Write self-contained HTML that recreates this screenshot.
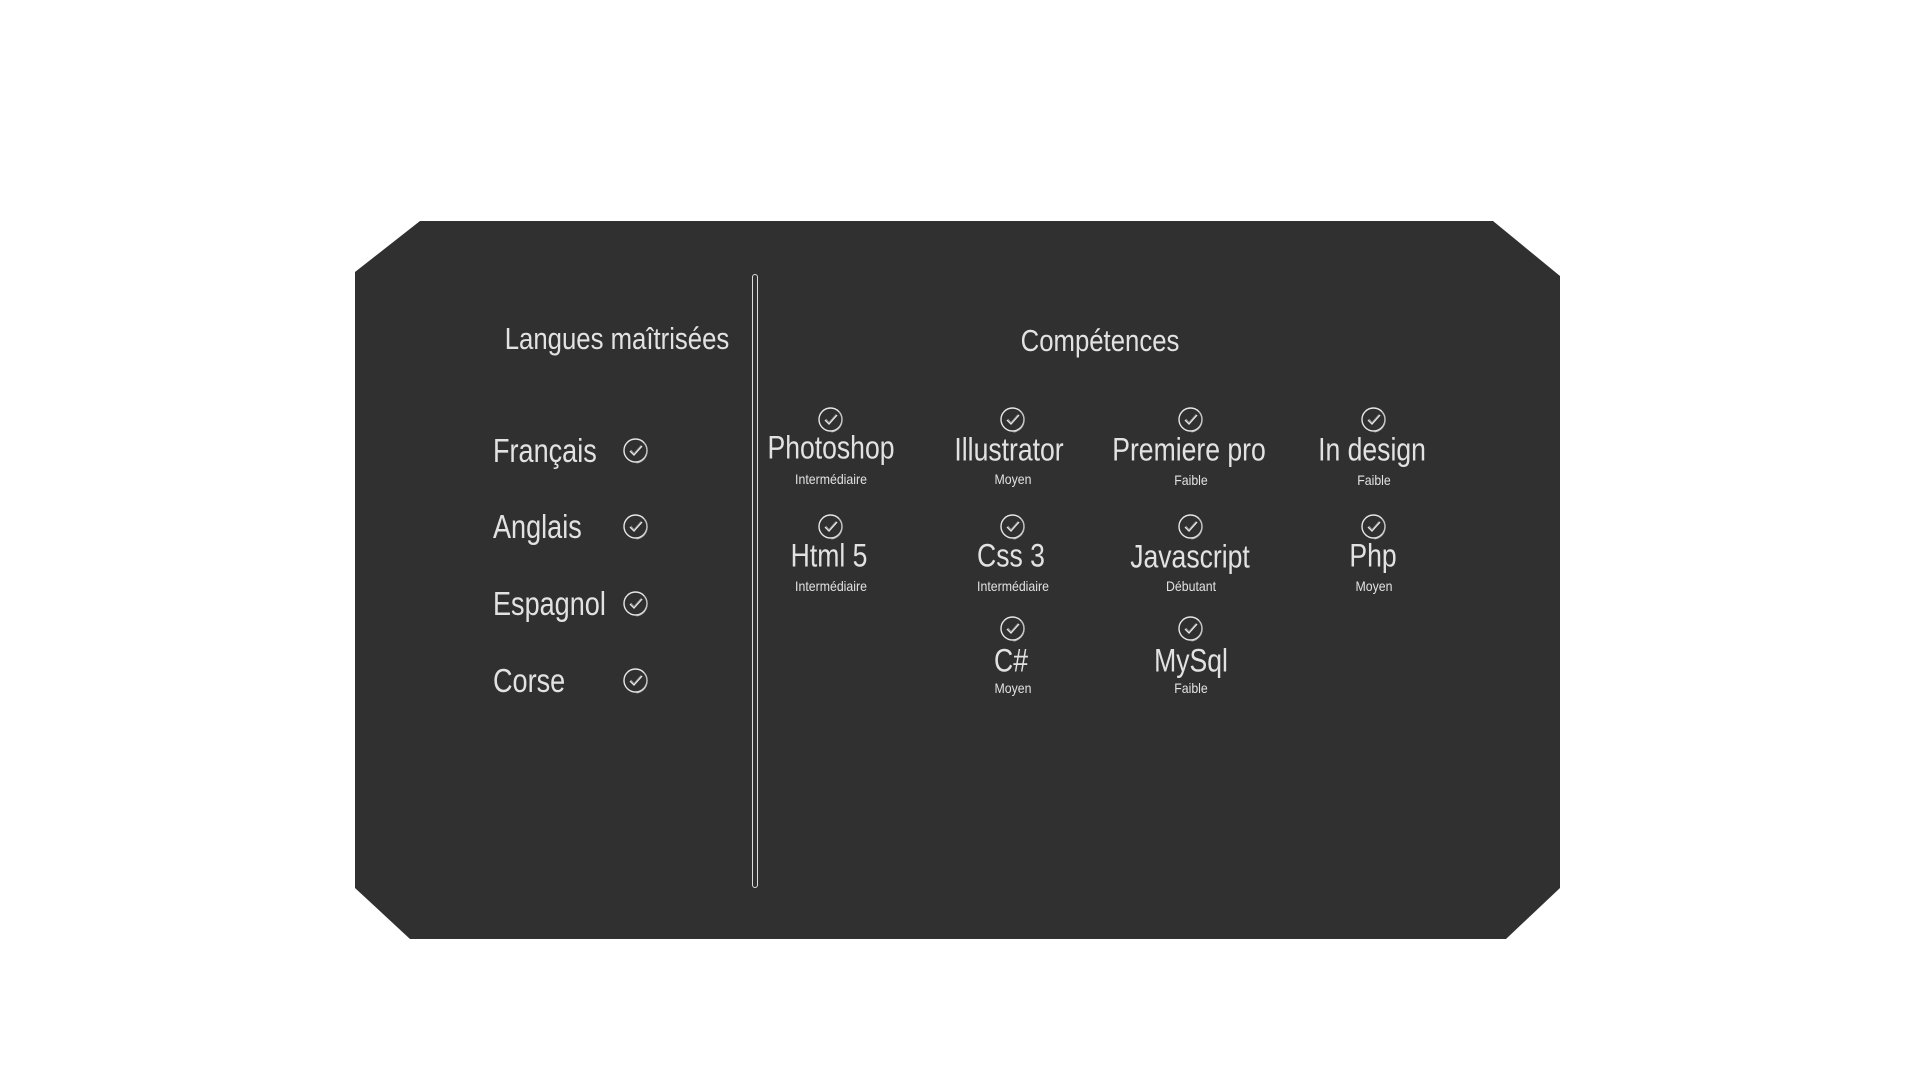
<!DOCTYPE html>
<html><head><meta charset="utf-8"><style>
body{margin:0;width:1920px;height:1080px;background:#fff;position:relative;overflow:hidden;font-family:"Liberation Sans",sans-serif;color:#e2e2e2}
.panel{position:absolute;left:355px;top:221px;width:1205px;height:718px;background:#303030;
clip-path:polygon(65px 0,1138px 0,1205px 55px,1205px 667px,1151px 718px,55px 718px,0 667px,0 51px)}
.div{position:absolute;left:752px;top:274px;width:4px;height:612px;border:1.5px solid #ddd;border-radius:4px}
.t{position:absolute;white-space:nowrap}
.c{transform:translate(-50%,-50%) scaleX(.83)}
.s{transform:translate(-50%,-50%) scaleX(.88)}
.l{transform-origin:0 50%;transform:scaleX(.82)}
.ic{position:absolute;width:28px;height:28px;transform:translate(-50%,-50%)}
</style></head><body>
<div class="panel"></div>
<div class="div"></div>
<div class="t c" style="left:617px;top:339px;font-size:31px">Langues maîtrisées</div>
<div class="t c" style="left:1100px;top:341px;font-size:31px">Compétences</div>
<div class="t l" style="left:493px;top:432px;font-size:33px">Français</div>
<div class="t l" style="left:493px;top:508px;font-size:33px">Anglais</div>
<div class="t l" style="left:493px;top:585px;font-size:33px">Espagnol</div>
<div class="t l" style="left:493px;top:662px;font-size:33px">Corse</div>
<svg width="0" height="0" style="position:absolute"><defs><symbol id="k" viewBox="0 0 28 28"><circle cx="13.5" cy="13.5" r="11.5" fill="none" stroke="#e6e6e6" stroke-width="1.4"/><path d="M22 6 A12 12 0 0 1 14.5 26" fill="none" stroke="#bbb" stroke-width="1"/><path d="M8 14 L12 18 L20 9" fill="none" stroke="#e6e6e6" stroke-width="1.4"/><path d="M9 13 L12 16.5 L19 8.5" fill="none" stroke="#999" stroke-width="0.8"/></symbol></defs></svg>
<svg class="ic" style="left:636px;top:451px"><use href="#k"/></svg>
<svg class="ic" style="left:636px;top:527px"><use href="#k"/></svg>
<svg class="ic" style="left:636px;top:604px"><use href="#k"/></svg>
<svg class="ic" style="left:636px;top:681px"><use href="#k"/></svg>

<svg class="ic" style="left:831px;top:420px"><use href="#k"/></svg>
<svg class="ic" style="left:1013px;top:420px"><use href="#k"/></svg>
<svg class="ic" style="left:1191px;top:420px"><use href="#k"/></svg>
<svg class="ic" style="left:1374px;top:420px"><use href="#k"/></svg>
<svg class="ic" style="left:831px;top:527px"><use href="#k"/></svg>
<svg class="ic" style="left:1013px;top:527px"><use href="#k"/></svg>
<svg class="ic" style="left:1191px;top:527px"><use href="#k"/></svg>
<svg class="ic" style="left:1374px;top:527px"><use href="#k"/></svg>
<svg class="ic" style="left:1013px;top:629px"><use href="#k"/></svg>
<svg class="ic" style="left:1191px;top:629px"><use href="#k"/></svg>

<div class="t c" style="left:831px;top:448px;font-size:32px">Photoshop</div>
<div class="t c" style="left:1009px;top:450px;font-size:32px">Illustrator</div>
<div class="t c" style="left:1189px;top:450px;font-size:32px">Premiere pro</div>
<div class="t c" style="left:1372px;top:450px;font-size:32px">In design</div>
<div class="t c" style="left:829px;top:556px;font-size:32px">Html 5</div>
<div class="t c" style="left:1011px;top:556px;font-size:32px">Css 3</div>
<div class="t c" style="left:1190px;top:557px;font-size:32px">Javascript</div>
<div class="t c" style="left:1373px;top:556px;font-size:32px">Php</div>
<div class="t c" style="left:1011px;top:661px;font-size:32px">C#</div>
<div class="t c" style="left:1191px;top:661px;font-size:32px">MySql</div>

<div class="t s" style="left:831px;top:479px;font-size:14px">Intermédiaire</div>
<div class="t s" style="left:1013px;top:479px;font-size:14px">Moyen</div>
<div class="t s" style="left:1191px;top:480px;font-size:14px">Faible</div>
<div class="t s" style="left:1374px;top:480px;font-size:14px">Faible</div>
<div class="t s" style="left:831px;top:586px;font-size:14px">Intermédiaire</div>
<div class="t s" style="left:1013px;top:586px;font-size:14px">Intermédiaire</div>
<div class="t s" style="left:1191px;top:586px;font-size:14px">Débutant</div>
<div class="t s" style="left:1374px;top:586px;font-size:14px">Moyen</div>
<div class="t s" style="left:1013px;top:688px;font-size:14px">Moyen</div>
<div class="t s" style="left:1191px;top:688px;font-size:14px">Faible</div>
</body></html>
